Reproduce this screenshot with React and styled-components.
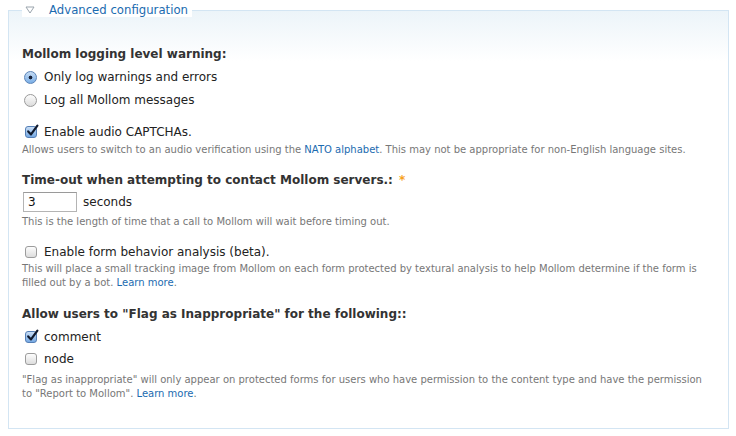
import styled, { createGlobalStyle } from "styled-components";

const GlobalStyle = createGlobalStyle`
  html, body {
    margin: 0;
    padding: 0;
    background: #fff;
  }
  body {
    font-family: "DejaVu Sans", Verdana, sans-serif;
    color: #333;
  }
`;

const Page = styled.div`
  width: 736px;
  height: 436px;
  padding: 0 7px 0 8px;
  box-sizing: border-box;
  overflow: hidden;
`;

const Fieldset = styled.fieldset`
  margin: 3px 0 0;
  padding: 24px 13px 16px;
  height: 426px;
  box-sizing: border-box;
  border: 1px solid #d3e5f3;
  background: linear-gradient(#ecf4f9 0px, #ffffff 50px);
  min-width: 0;
`;

const Legend = styled.legend`
  margin-left: 0;
  padding: 0 4px 0 3px;
  display: flex;
  align-items: center;
  gap: 14px;
  font-size: 11.7px;
  color: #1b6bb0;
  background: #fff;
`;

const Arrow = styled.svg`
  width: 10px;
  height: 8px;
  display: block;
`;

const Heading = styled.div`
  font-weight: bold;
  font-size: 12px;
  color: #333;
  margin-top: ${(p) => p.$top || 0}px;
  line-height: 16px;
`;

const Required = styled.span`
  color: #f7a21c;
  margin-left: 6px;
`;

const Option = styled.label`
  display: flex;
  align-items: center;
  gap: 7px;
  font-size: 12px;
  line-height: 16px;
  margin-top: ${(p) => p.$top || 0}px;
  padding-left: 2px;
  color: #222;
`;

const Radio = styled.span`
  width: 13px;
  height: 13px;
  border-radius: 50%;
  box-sizing: border-box;
  border: 1px solid ${(p) => (p.$on ? "#5b84b8" : "#9a9a9a")};
  background: ${(p) =>
    p.$on
      ? "radial-gradient(circle, #17223a 0 1.6px, transparent 2.2px), linear-gradient(#c6dcf4, #7aaee6)"
      : "linear-gradient(#fdfdfd, #dcdcdc)"};
  flex: none;
`;

const Box = styled.span`
  width: 12px;
  height: 12px;
  border-radius: 3px;
  box-sizing: border-box;
  border: 1px solid ${(p) => (p.$on ? "#557fb6" : "#9c9c9c")};
  background: ${(p) =>
    p.$on ? "linear-gradient(#c8ddf5, #76a9e3)" : "linear-gradient(#fdfdfd, #dddddd)"};
  flex: none;
  position: relative;
  margin-left: 1px;
`;

const Tick = styled.svg`
  position: absolute;
  left: 0px;
  top: -3px;
  width: 13px;
  height: 13px;
`;

const Description = styled.div`
  font-size: 10px;
  line-height: 14px;
  color: #777;
  margin-top: ${(p) => p.$top || 0}px;

  a {
    color: #1b6bb0;
    text-decoration: none;
  }
`;

const InputRow = styled.div`
  display: flex;
  align-items: center;
  gap: 6px;
  margin-top: 4px;
  font-size: 12px;
  color: #222;
  padding-left: 1px;
`;

const TextInput = styled.div`
  width: 54px;
  height: 20px;
  box-sizing: border-box;
  border: 1px solid #b4b4b4;
  border-top-color: #9a9a9a;
  padding: 2px 4px;
  font-size: 12px;
  line-height: 14px;
  color: #111;
  background: #fff;
`;

function Check({ on }) {
  return (
    <Box $on={on}>
      {on && (
        <Tick viewBox="0 0 13 13">
          <path d="M2.2 7.4 L5 10.4 L11.4 1.6" fill="none" stroke="#101a2e" strokeWidth="2.2" strokeLinecap="round" strokeLinejoin="round" />
        </Tick>
      )}
    </Box>
  );
}

export default function App() {
  return (
    <Page>
      <GlobalStyle />
      <Fieldset>
        <Legend>
          <Arrow viewBox="0 0 10 8">
            <path d="M1 1 H9 L5 7 Z" fill="none" stroke="#9aa4ad" strokeWidth="1" strokeLinejoin="round" />
          </Arrow>
          Advanced configuration
        </Legend>

        <Heading $top={5}>Mollom logging level warning:</Heading>
        <Option $top={7}>
          <Radio $on />
          Only log warnings and errors
        </Option>
        <Option $top={7}>
          <Radio />
          Log all Mollom messages
        </Option>

        <Option $top={16}>
          <Check on />
          Enable audio CAPTCHAs.
        </Option>
        <Description $top={3}>
          Allows users to switch to an audio verification using the <a href="#">NATO alphabet</a>. This may not be appropriate for non-English language sites.
        </Description>

        <Heading $top={15}>
          Time-out when attempting to contact Mollom servers.:<Required>*</Required>
        </Heading>
        <InputRow>
          <TextInput>3</TextInput>
          seconds
        </InputRow>
        <Description $top={3}>
          This is the length of time that a call to Mollom will wait before timing out.
        </Description>

        <Option $top={15}>
          <Check />
          Enable form behavior analysis (beta).
        </Option>
        <Description $top={2}>
          This will place a small tracking image from Mollom on each form protected by textural analysis to help Mollom determine if the form is filled out by a bot. <a href="#">Learn more</a>.
        </Description>

        <Heading $top={16}>Allow users to "Flag as Inappropriate" for the following::</Heading>
        <Option $top={7}>
          <Check on />
          comment
        </Option>
        <Option $top={6}>
          <Check />
          node
        </Option>
        <Description $top={6}>
          "Flag as inappropriate" will only appear on protected forms for users who have permission to the content type and have the permission to "Report to Mollom". <a href="#">Learn more</a>.
        </Description>
      </Fieldset>
    </Page>
  );
}
